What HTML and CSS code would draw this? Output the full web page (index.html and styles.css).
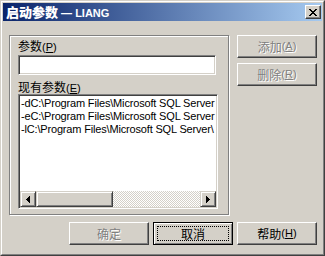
FILE: index.html
```html
<!DOCTYPE html>
<html>
<head>
<meta charset="utf-8">
<link rel="stylesheet" href="styles.css">
</head>
<body>
<div class="window">
  <div class="frame">
    <div class="titlebar">
      <span class="title"><span class="zh">启动参数</span> — LIANG</span>
      <button class="close" aria-label="关闭">
        <svg width="8" height="7" viewBox="0 0 8 7" shape-rendering="crispEdges"><path fill="#000" d="M0 0h2v1h-2z M6 0h2v1h-2z M1 1h2v1h-2z M5 1h2v1h-2z M2 2h4v1h-4z M3 3h2v1h-2z M2 4h4v1h-4z M1 5h2v1h-2z M5 5h2v1h-2z M0 6h2v1h-2z M6 6h2v1h-2z"/></svg>
      </button>
    </div>
    <div class="client">
      <div class="top">
        <div class="group">
          <div class="lbl"><span class="zh">参数</span>(<u>P</u>)</div>
          <div class="edit"></div>
          <div class="lbl lbl2"><span class="zh">现有参数</span>(<u>E</u>)</div>
          <div class="list">
            <div class="items">
              <div class="item">-dC:\Program Files\Microsoft SQL Server</div>
              <div class="item">-eC:\Program Files\Microsoft SQL Server</div>
              <div class="item">-lC:\Program Files\Microsoft SQL Server\</div>
            </div>
            <div class="hscroll">
              <div class="sbtn"><svg width="4" height="7" viewBox="0 0 4 7" shape-rendering="crispEdges"><path fill="#000" d="M3 0h1v7h-1z M2 1h1v5h-1z M1 2h1v3h-1z M0 3h1v1h-1z"/></svg></div>
              <div class="thumb"></div>
              <div class="track"></div>
              <div class="sbtn"><svg width="4" height="7" viewBox="0 0 4 7" shape-rendering="crispEdges"><path fill="#000" d="M0 0h1v7h-1z M1 1h1v5h-1z M2 2h1v3h-1z M3 3h1v1h-1z"/></svg></div>
            </div>
          </div>
        </div>
        <div class="side">
          <button class="btn disabled"><span class="zh">添加</span>(<u>A</u>)</button>
          <button class="btn disabled"><span class="zh">删除</span>(<u>R</u>)</button>
        </div>
      </div>
      <div class="bottom">
        <button class="btn disabled"><span class="zh">确定</span></button>
        <button class="btn default"><span class="zh">取消</span></button>
        <button class="btn"><span class="zh">帮助</span>(<u>H</u>)</button>
      </div>
    </div>
  </div>
</div>
</body>
</html>
```
FILE: styles.css
```css
* { box-sizing: border-box; }
html, body { margin: 0; padding: 0; }
body {
  width: 325px;
  height: 256px;
  overflow: hidden;
  background: #d4d0c8;
  font-family: "Liberation Sans", "Noto Sans CJK SC", sans-serif;
  font-size: 11px;
  color: #000;
}
.zh { font-family: "Noto Sans CJK SC", sans-serif; font-size: 12px; }
.window {
  width: 325px;
  height: 256px;
  border: 1px solid;
  border-color: #d4d0c8 #404040 #404040 #d4d0c8;
  background: #d4d0c8;
}
.frame {
  height: 100%;
  border: 1px solid;
  border-color: #fff #808080 #808080 #fff;
  padding: 1px;
  display: flex;
  flex-direction: column;
}
.titlebar {
  height: 18px;
  flex: none;
  display: flex;
  align-items: center;
  justify-content: space-between;
  padding: 0 1px 0 3px;
  background: linear-gradient(to right, #0a246a, #a6caf0);
}
.title {
  color: #fff;
  font-weight: bold;
  font-size: 11px;
  line-height: 18px;
  white-space: nowrap;
}
.title .zh { font-weight: 900; font-size: 13px; }
.close {
  width: 16px;
  height: 14px;
  padding: 0;
  margin: 0;
  border: 1px solid;
  border-color: #fff #404040 #404040 #fff;
  box-shadow: inset -1px -1px #808080;
  background: #d4d0c8;
  display: flex;
  align-items: center;
  justify-content: center;
}
.close svg { display: block; }
.client {
  flex: 1;
  padding: 14px 5px 0 6px;
  display: flex;
  flex-direction: column;
}
.top { display: flex; gap: 8px; }
.group {
  width: 220px;
  height: 180px;
  border: 1px solid #808080;
  box-shadow: inset 1px 1px #fff, 1px 1px #fff;
  padding: 0 0 0 8px;
  display: flex;
  flex-direction: column;
  align-items: flex-start;
}
.lbl {
  height: 13px;
  line-height: 13px;
  margin-top: 3px;
  white-space: nowrap;
}
.lbl2 { margin-top: 5px; }
.edit {
  width: 198px;
  height: 20px;
  margin-top: 3px;
  background: #fff;
  border: 1px solid;
  border-color: #808080 #fff #fff #808080;
  box-shadow: inset 1px 1px #404040, inset -1px -1px #d4d0c8;
}
.list {
  width: 200px;
  height: 115px;
  margin-top: 1px;
  background: #fff;
  border: 1px solid;
  border-color: #808080 #fff #fff #808080;
  box-shadow: inset 1px 1px #404040, inset -1px -1px #d4d0c8;
  padding: 1px;
  display: flex;
  flex-direction: column;
}
.items {
  flex: 1;
  overflow: hidden;
  padding: 1px 0 0 1px;
  white-space: nowrap;
}
.item { height: 13px; line-height: 13px; letter-spacing: -0.17px; }
.hscroll {
  height: 16px;
  flex: none;
  display: flex;
}
.sbtn, .thumb {
  height: 16px;
  background: #d4d0c8;
  border: 1px solid;
  border-color: #d4d0c8 #404040 #404040 #d4d0c8;
  box-shadow: inset 1px 1px #fff, inset -1px -1px #808080;
}
.sbtn {
  width: 16px;
  flex: none;
  display: flex;
  align-items: center;
  justify-content: center;
}
.sbtn svg { display: block; }
.thumb { width: 77px; flex: none; }
.track {
  flex: 1;
  background: repeating-conic-gradient(#fff 0 25%, #d4d0c8 0 50%) 0 0 / 2px 2px;
}
.side { display: flex; flex-direction: column; gap: 5px; }
.btn {
  width: 80px;
  height: 23px;
  padding: 0;
  margin: 0;
  font-family: "Liberation Sans", "Noto Sans CJK SC", sans-serif;
  font-size: 11px;
  color: #000;
  background: #d4d0c8;
  border: 1px solid;
  border-color: #fff #404040 #404040 #fff;
  box-shadow: inset -1px -1px #808080;
  display: flex;
  align-items: center;
  justify-content: center;
  line-height: 13px;
  white-space: nowrap;
}
.btn.disabled { color: #808080; text-shadow: 1px 1px 0 #fff; }
.btn.default {
  position: relative;
  border: 1px solid #000;
  box-shadow: inset 1px 1px #fff, inset -1px -1px #808080;
}
.btn.default::after {
  content: "";
  position: absolute;
  inset: 3px;
  border: 1px dotted #000;
}
.bottom {
  display: flex;
  justify-content: flex-end;
  gap: 4px;
  margin-top: 7px;
}
```
